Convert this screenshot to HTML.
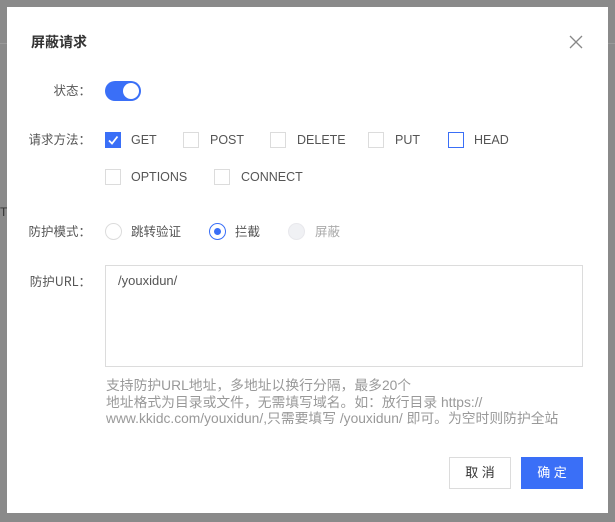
<!DOCTYPE html>
<html><head><meta charset="utf-8"><style>
*{margin:0;padding:0;box-sizing:border-box}
body{width:615px;height:522px;background:#8a8a8a;position:relative;overflow:hidden;font-family:"Liberation Sans","Noto Sans CJK SC",sans-serif;font-size:13px;color:#555}
.dlg{position:absolute;left:7px;top:7px;width:601px;height:506px;background:#fff}
.a{position:absolute;white-space:nowrap}
.lbl{position:absolute;right:524px;text-align:right;color:#555;font-family:"Noto Sans CJK SC",sans-serif;font-size:12.5px;line-height:16px}
.cb{position:absolute;width:16px;height:16px;border:1px solid #dcdcdc;background:#fff}
.rd{position:absolute;width:17px;height:17px;border:1px solid #dcdcdc;border-radius:50%;background:#fff}
.t{position:absolute;line-height:16px;color:#555;font-size:12.5px}
</style></head><body>
<div class="a" style="left:0;top:43px;width:7px;height:1px;background:#9a9a9a"></div>
<div class="a" style="left:608px;top:43px;width:7px;height:1px;background:#9a9a9a"></div>
<div class="a" style="left:0;top:205px;font-size:12px;color:#333">T,</div>
<div class="dlg"></div>
<div class="a" style="left:31px;top:32px;font-size:14px;font-weight:bold;color:#333">屏蔽请求</div>
<svg class="a" style="left:569px;top:35px" width="14" height="14" viewBox="0 0 14 14"><path d="M1 1L13 13M13 1L1 13" stroke="#888" stroke-width="1.3"/></svg>

<div class="lbl" style="top:82px">状态：</div>
<div class="a" style="left:105px;top:81px;width:36px;height:20px;border-radius:10px;background:#3a6ff7"></div>
<div class="a" style="left:123px;top:83px;width:16px;height:16px;border-radius:50%;background:#fff"></div>

<div class="lbl" style="top:131px">请求方法：</div>
<div class="cb" style="left:105px;top:132px;background:#3a6ff7;border-color:#3a6ff7"><svg width="14" height="14" viewBox="0 0 14 14" style="position:absolute;left:0;top:0"><path d="M3 7.5L6 10.5L11.5 3.5" stroke="#fff" stroke-width="1.8" fill="none"/></svg></div>
<div class="t" style="left:131px;top:132px">GET</div>
<div class="cb" style="left:183px;top:132px"></div><div class="t" style="left:210px;top:132px">POST</div>
<div class="cb" style="left:270px;top:132px"></div><div class="t" style="left:297px;top:132px">DELETE</div>
<div class="cb" style="left:368px;top:132px"></div><div class="t" style="left:395px;top:132px">PUT</div>
<div class="cb" style="left:448px;top:132px;border-color:#3a6ff7"></div><div class="t" style="left:474px;top:132px">HEAD</div>
<div class="cb" style="left:105px;top:169px"></div><div class="t" style="left:131px;top:169px">OPTIONS</div>
<div class="cb" style="left:214px;top:169px"></div><div class="t" style="left:241px;top:169px">CONNECT</div>

<div class="lbl" style="top:223px">防护模式：</div>
<div class="rd" style="left:105px;top:223px"></div><div class="t" style="left:131px;top:224px">跳转验证</div>
<div class="rd" style="left:209px;top:223px;border-color:#3a6ff7"><div style="position:absolute;left:4px;top:4px;width:7px;height:7px;border-radius:50%;background:#3a6ff7"></div></div><div class="t" style="left:235px;top:224px">拦截</div>
<div class="rd" style="left:288px;top:223px;background:#f0f1f4;border-color:#e8e8ec"></div><div class="t" style="left:315px;top:224px;color:#aaa">屏蔽</div>

<div class="lbl" style="top:273px">防护URL：</div>
<div class="a" style="left:105px;top:265px;width:478px;height:102px;border:1px solid #dcdcdc"></div>
<div class="t" style="left:118px;top:273px;color:#555;font-size:13px">/youxidun/</div>

<div class="a" style="left:106px;top:378px;line-height:16.5px;color:#999;font-size:13.8px">支持防护URL地址，多地址以换行分隔，最多20个<br>地址格式为目录或文件，无需填写域名。如：放行目录 https://<br>www.kkidc.com/youxidun/,只需要填写 /youxidun/ 即可。为空时则防护全站</div>

<div class="a" style="left:449px;top:457px;width:62px;height:32px;border:1px solid #dcdcdc;text-align:center;line-height:30px;color:#333">取 消</div>
<div class="a" style="left:521px;top:457px;width:62px;height:32px;background:#3a6ff7;text-align:center;line-height:32px;color:#fff">确 定</div>
</body></html>
